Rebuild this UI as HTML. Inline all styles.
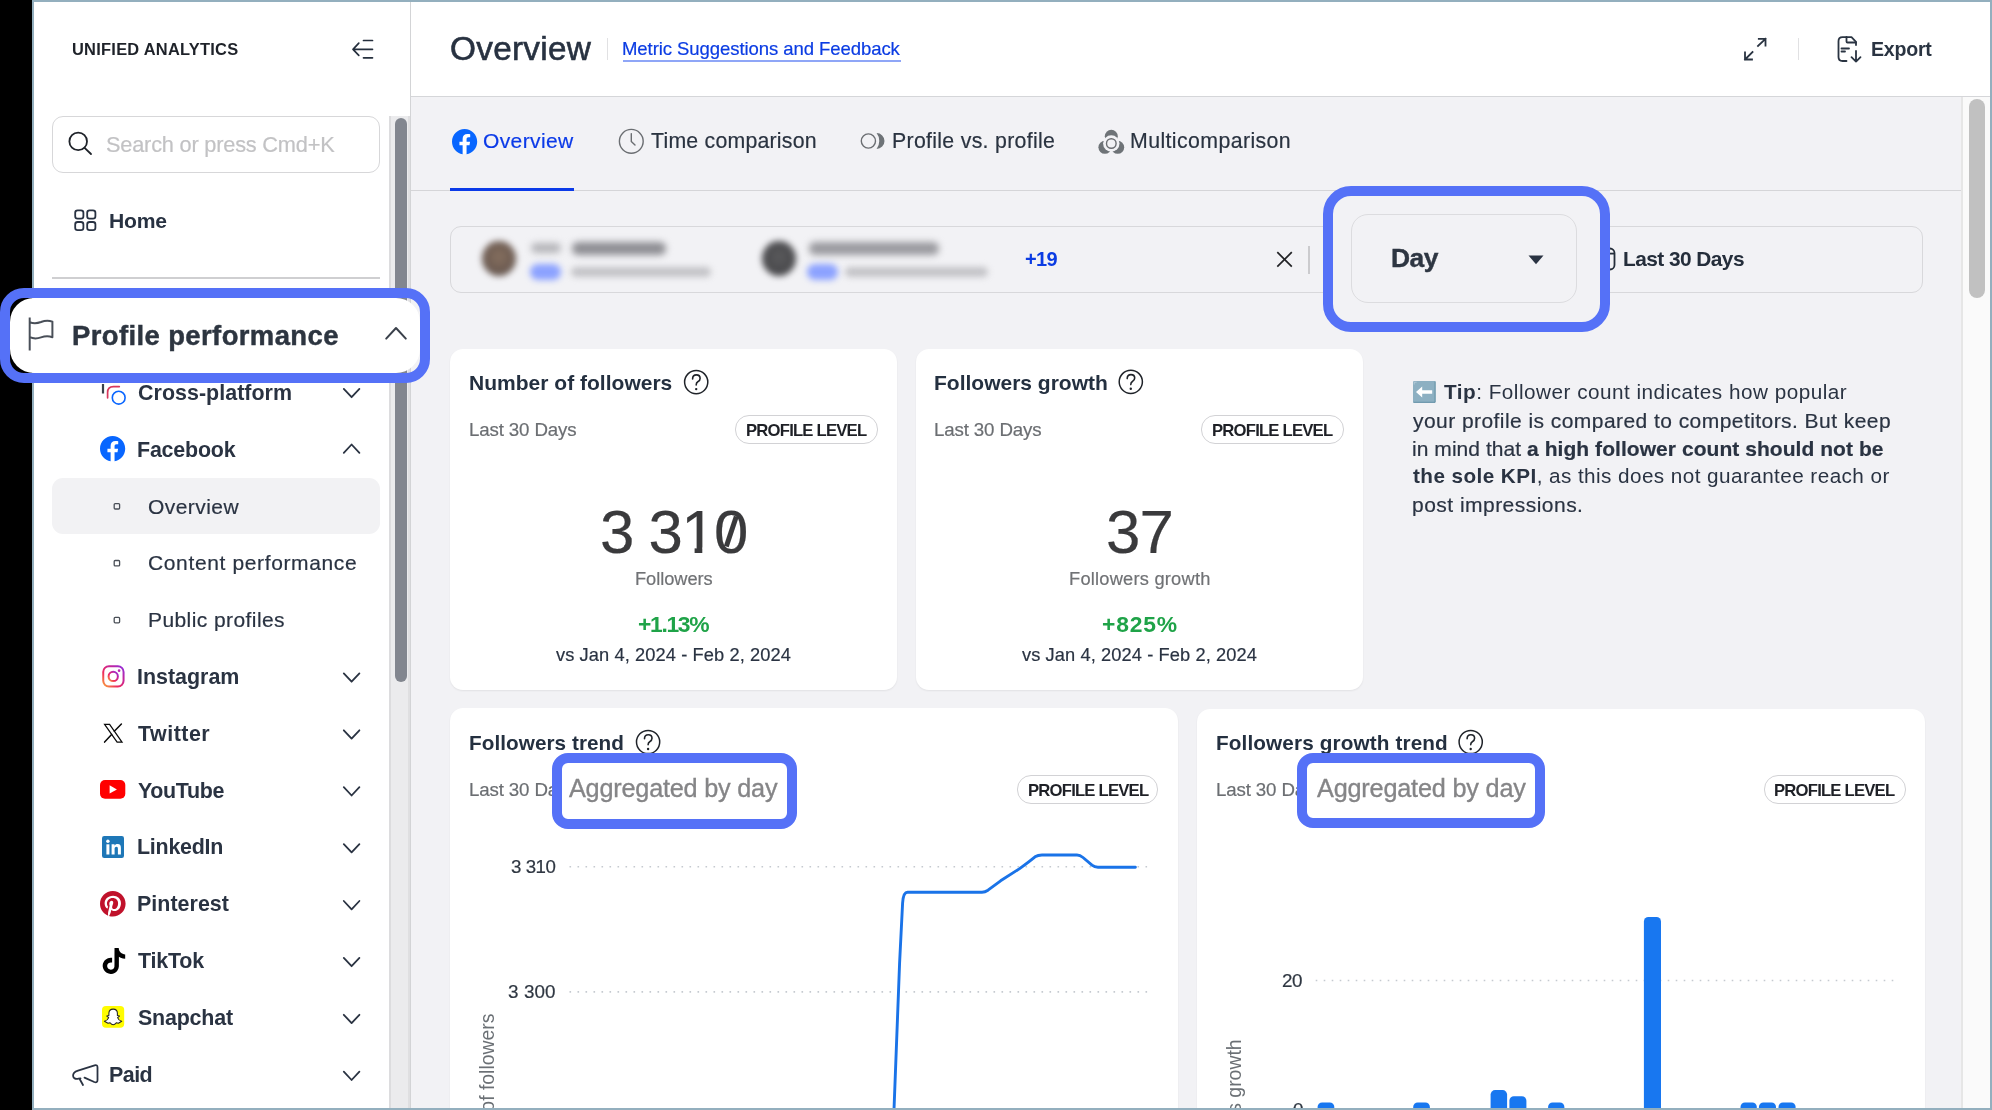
<!DOCTYPE html>
<html><head><meta charset="utf-8"><title>Overview</title>
<style>
html,body{margin:0;padding:0;width:1992px;height:1110px;overflow:hidden}
body{width:1992px;height:1110px;overflow:hidden;position:relative;background:#000;font-family:"Liberation Sans",sans-serif}
.a{position:absolute}
.t{position:absolute;white-space:nowrap;font-family:"Liberation Sans",sans-serif;will-change:transform}
svg{position:absolute;overflow:visible}
#root{position:relative;width:1992px;height:1110px;overflow:hidden;background:#000}
</style></head><body>
<div id="root">
<!-- frame -->
<div class="a" style="left:32px;top:0;width:1960px;height:1110px;background:#93AFBE"></div>
<div class="a" style="left:34px;top:2px;width:1956px;height:1106px;background:#fff"></div>
<!-- main bg -->
<div class="a" style="left:411px;top:97px;width:1550px;height:1011px;background:#F2F2F5"></div>
<div class="a" style="left:411px;top:96px;width:1579px;height:1px;background:#D5D6D9"></div>
<div class="a" style="left:410px;top:2px;width:1px;height:1106px;background:#D3D4D6"></div>
<!-- main scrollbar -->
<div class="a" style="left:1961px;top:97px;width:2px;height:1011px;background:#E6E6E6"></div>
<div class="a" style="left:1963px;top:97px;width:27px;height:1011px;background:#FAFAFA"></div>
<div class="a" style="left:1969px;top:99px;width:16px;height:199px;background:#C1C1C1;border-radius:8px"></div>
<!-- sidebar scrollbar -->
<div class="a" style="left:389px;top:116px;width:21px;height:992px;background:#EBEBED;border-left:2px solid #DCDCDE;border-right:2px solid #DFDFE1;box-sizing:border-box"></div>
<div class="a" style="left:395px;top:118px;width:12px;height:564px;background:#82868F;border-radius:6px"></div>

<!-- ===== header ===== -->
<svg style="left:0;top:0" width="1992" height="100">
 <g fill="none" stroke="#252F3D" stroke-width="1.7" stroke-linecap="round" stroke-linejoin="round">
  <path d="M363.5 40.5H372.5M353 49.3H372.5M363.5 57.8H372.5M358.8 43.2L353 49.3L358.8 55.3"/>
 </g>
 <g fill="none" stroke="#2A3442" stroke-width="1.8" stroke-linecap="square">
  <path d="M1758 46L1765.5 38.8M1758.8 38.8H1765.5V45.5M1752.5 52L1745 59.5M1745 52.5V59.5H1752"/>
 </g>
 <g fill="none" stroke="#2A3442" stroke-width="1.8" stroke-linecap="round" stroke-linejoin="round">
  <path d="M1846.5 37.2H1842.5Q1838.5 37.2 1838.5 41.2V57Q1838.5 61 1842.5 61H1846.5"/>
  <path d="M1846.5 37.2L1851.5 37.2L1856 41.8V45"/>
  <path d="M1846.5 37.2V41.5Q1846.5 42.5 1847.5 42.5H1856"/>
  <path d="M1841.5 48.5H1849M1841.5 51.5H1845"/>
  <path d="M1856 51V61.5M1851.5 57.2L1856 61.6L1860.5 57.2"/>
 </g>
</svg>
<div class="a" style="left:607px;top:38px;width:1px;height:22px;background:#E1E1E3"></div>
<div class="a" style="left:622.8px;top:60.2px;width:278px;height:2px;background:#8FA6F7"></div>
<div class="a" style="left:1798px;top:38px;width:1px;height:22px;background:#E1E1E3"></div>

<!-- ===== sidebar ===== -->
<div class="a" style="left:52.3px;top:116.4px;width:327.4px;height:56.2px;border:1.3px solid #D7D7D9;border-radius:11px;box-sizing:border-box"></div>
<svg style="left:0;top:0" width="400" height="1110">
 <g fill="none" stroke="#1F232A" stroke-width="1.8" stroke-linecap="round">
  <circle cx="78.2" cy="141.4" r="8.8"/><path d="M84.6 147.8L91 154"/>
 </g>
 <g fill="none" stroke="#283242" stroke-width="1.8">
  <rect x="75.2" y="210.4" width="8.2" height="8.2" rx="2.4"/>
  <rect x="87.2" y="210.4" width="8.2" height="8.2" rx="2.4"/>
  <rect x="75.2" y="222" width="8.2" height="8.2" rx="2.4"/>
  <rect x="87.2" y="222" width="8.2" height="8.2" rx="2.4"/>
 </g>
</svg>
<div class="a" style="left:52px;top:277px;width:328px;height:2px;background:#CFCFD1"></div>
<div class="a" style="left:52px;top:478px;width:328px;height:56px;background:#F2F2F4;border-radius:11px"></div>
<svg style="left:0;top:0" width="400" height="1110">
 <g fill="none" stroke="#2A3342" stroke-width="1.8" stroke-linecap="round" stroke-linejoin="round">
  <path d="M343.8 388.9L351.6 397.2L359.4 388.9"/>
  <path d="M343.8 673.4L351.6 681.7L359.4 673.4"/>
  <path d="M343.8 730.3L351.6 738.6L359.4 730.3"/>
  <path d="M343.8 787.2L351.6 795.5L359.4 787.2"/>
  <path d="M343.8 844.1L351.6 852.4L359.4 844.1"/>
  <path d="M343.8 901.0L351.6 909.3L359.4 901.0"/>
  <path d="M343.8 957.9L351.6 966.2L359.4 957.9"/>
  <path d="M343.8 1014.8L351.6 1023.1L359.4 1014.8"/>
  <path d="M343.8 1071.7L351.6 1080.0L359.4 1071.7"/>
  <path d="M343.8 452.8L351.6 444.5L359.4 452.8"/>
 </g>
 <g fill="none" stroke="#4A4F57" stroke-width="1.3">
  <rect x="114.2" y="503.6" width="5.4" height="5.4" rx="1"/>
  <rect x="114.2" y="560.5" width="5.4" height="5.4" rx="1"/>
  <rect x="114.2" y="617.4" width="5.4" height="5.4" rx="1"/>
 </g>
 <path d="M103 384V393.5" stroke="#3A414B" stroke-width="2.2" fill="none"/>
 <path d="M107.6 397.8V392.5Q107.6 386.6 113.4 386.6H119.3" stroke="#D8375C" stroke-width="1.7" fill="none" stroke-linecap="round"/>
 <circle cx="118.7" cy="397.7" r="6.4" stroke="#0A66FF" stroke-width="1.6" fill="none"/>
</svg>
<!-- FB sidebar -->
<svg style="left:100.4px;top:436.4px" width="25.2" height="25.2" viewBox="0 0 24 24"><circle cx="12" cy="12" r="11.6" fill="#fff"/><path fill="#0866FF" d="M24 12.073C24 5.405 18.627 0 12 0S0 5.405 0 12.073C0 18.1 4.388 23.094 10.125 24v-8.437H7.078v-3.49h3.047V9.41c0-3.025 1.792-4.697 4.533-4.697 1.312 0 2.686.236 2.686.236v2.971H15.83c-1.491 0-1.956.93-1.956 1.886v2.267h3.328l-.532 3.49h-2.796V24C19.612 23.094 24 18.1 24 12.073z"/></svg>
<!-- Instagram -->
<svg style="left:101.8px;top:664.6px" width="22.8" height="22.8" viewBox="0 0 24 24"><defs><linearGradient id="ig" x1="0" y1="1" x2="1" y2="0"><stop offset="0" stop-color="#F9A23A"/><stop offset="0.35" stop-color="#EE2A5F"/><stop offset="0.7" stop-color="#C1259F"/><stop offset="1" stop-color="#8E2FE0"/></linearGradient></defs><g fill="none" stroke="url(#ig)" stroke-width="2.1"><rect x="1.3" y="1.3" width="21.4" height="21.4" rx="6"/><circle cx="11.8" cy="12" r="4.9"/></g><circle cx="18" cy="6" r="1.4" fill="#B82AB0"/></svg>
<!-- X -->
<svg style="left:0;top:0" width="140" height="760"><g fill="none" stroke="#0A0A0A" stroke-linejoin="miter"><path d="M104.6 724.3H109.6L122 742.1H117.1Z" stroke-width="1.25"/><path d="M121.4 724L114.3 731.2M111.6 734.4L104.6 742.1" stroke-width="1.5" stroke-linecap="round"/></g></svg>
<!-- YouTube -->
<svg style="left:100.4px;top:780.4px" width="25.3" height="18.8" viewBox="0 0 25.3 18.8"><rect x="0" y="0" width="25.3" height="18.8" rx="5" fill="#FF0000"/><path d="M9.6 5.2V13.6L16.9 9.4Z" fill="#fff"/></svg>
<!-- LinkedIn -->
<svg style="left:102.2px;top:836.1px" width="22" height="22" viewBox="0 0 22 22"><rect width="22" height="22" rx="2.2" fill="#1E77B7"/><circle cx="5.9" cy="5.3" r="1.7" fill="#fff"/><rect x="4.4" y="8.3" width="3" height="10.2" fill="#fff"/><path fill="#fff" d="M9.6 8.3h2.9v1.4c.5-.9 1.6-1.6 3.1-1.6 2.6 0 3.3 1.6 3.3 4v6.4h-3v-5.6c0-1.2-.3-2.1-1.5-2.1-1.3 0-1.8 1-1.8 2.2v5.5h-3z"/></svg>
<!-- Pinterest -->
<svg style="left:100.4px;top:891.3px" width="25.6" height="25.6" viewBox="0 0 24 24"><circle cx="12" cy="12" r="11.5" fill="#fff"/><path fill="#C0122B" d="M12 0C5.373 0 0 5.372 0 12c0 5.084 3.163 9.426 7.627 11.174-.105-.949-.2-2.405.042-3.441.218-.937 1.407-5.965 1.407-5.965s-.359-.719-.359-1.782c0-1.668.967-2.914 2.171-2.914 1.023 0 1.518.769 1.518 1.69 0 1.029-.655 2.568-.994 3.995-.283 1.194.599 2.169 1.777 2.169 2.133 0 3.772-2.249 3.772-5.495 0-2.873-2.064-4.882-5.012-4.882-3.414 0-5.418 2.561-5.418 5.207 0 1.031.397 2.138.893 2.738a.36.36 0 01.083.345l-.333 1.36c-.053.22-.174.267-.402.161-1.499-.698-2.436-2.889-2.436-4.649 0-3.785 2.75-7.262 7.929-7.262 4.163 0 7.398 2.967 7.398 6.931 0 4.136-2.607 7.464-6.227 7.464-1.216 0-2.359-.631-2.75-1.378l-.748 2.853c-.271 1.043-1.002 2.35-1.492 3.146C9.57 23.812 10.763 24 12 24c6.627 0 12-5.373 12-12 0-6.628-5.373-12-12-12z"/></svg>
<!-- TikTok -->
<svg style="left:101.4px;top:948px" width="25.9" height="25.9" viewBox="0 0 24 24"><path fill="#000" d="M12.525.02c1.31-.02 2.61-.01 3.91-.02.08 1.53.63 3.09 1.75 4.17 1.12 1.11 2.7 1.62 4.24 1.79v4.03c-1.44-.05-2.89-.35-4.2-.97-.57-.26-1.1-.59-1.62-.93-.01 2.92.01 5.84-.02 8.75-.08 1.4-.54 2.79-1.35 3.94-1.31 1.92-3.58 3.17-5.91 3.21-1.43.08-2.86-.31-4.08-1.03-2.02-1.19-3.44-3.37-3.65-5.71-.02-.5-.03-1-.01-1.49.18-1.9 1.12-3.72 2.58-4.96 1.66-1.44 3.98-2.13 6.15-1.72.02 1.48-.04 2.96-.04 4.44-.99-.32-2.15-.23-3.02.37-.63.41-1.11 1.04-1.36 1.75-.21.51-.15 1.07-.14 1.61.24 1.64 1.82 3.02 3.5 2.87 1.12-.01 2.19-.66 2.77-1.61.19-.33.4-.67.41-1.06.1-1.79.06-3.57.07-5.36.01-4.03-.01-8.05.02-12.07z"/></svg>
<!-- Snapchat -->
<svg style="left:102.1px;top:1006.2px" width="22.2" height="21.8" viewBox="0 0 22.2 21.8"><rect width="22.2" height="21.8" rx="4" fill="#FFFC00"/><path fill="#fff" stroke="#222" stroke-width="1.05" stroke-linejoin="round" d="M11.2 3.1C13.8 3.1 15.4 4.9 15.4 7.3V9.4L17.5 10.1L15.6 11.6C16.2 13.4 17.8 14.8 19.7 15.3L16.4 17.2L14.3 16.8Q12.8 18.8 11.2 18.8Q9.6 18.8 8.1 16.8L6 17.2L2.4 15.3C4.4 14.8 6 13.4 6.7 11.6L4.8 10.1L6.9 9.4V7.3C6.9 4.9 8.6 3.1 11.2 3.1Z"/></svg>
<!-- megaphone -->
<svg style="left:0;top:0" width="120" height="1110"><path fill="none" stroke="#2A3342" stroke-width="1.8" stroke-linejoin="round" stroke-linecap="round" d="M84.5 1077.6L94.3 1082Q97.5 1083.2 97.5 1080V1067.5Q97.5 1064.4 94.6 1065.3L78 1070.6Q72.8 1072.3 73.1 1075.8Q73.5 1079.6 78.5 1078.6L80.5 1078.3M79.5 1078.7L83 1085"/></svg>
<!-- ===== tabs ===== -->
<svg style="left:451.6px;top:128.6px" width="25.2" height="25.2" viewBox="0 0 24 24"><circle cx="12" cy="12" r="11.6" fill="#fff"/><path fill="#0866FF" d="M24 12.073C24 5.405 18.627 0 12 0S0 5.405 0 12.073C0 18.1 4.388 23.094 10.125 24v-8.437H7.078v-3.49h3.047V9.41c0-3.025 1.792-4.697 4.533-4.697 1.312 0 2.686.236 2.686.236v2.971H15.83c-1.491 0-1.956.93-1.956 1.886v2.267h3.328l-.532 3.49h-2.796V24C19.612 23.094 24 18.1 24 12.073z"/></svg>
<svg style="left:0;top:0" width="1992" height="200">
 <g fill="none" stroke="#6B6E72" stroke-width="1.4" stroke-linecap="round" stroke-linejoin="round">
  <circle cx="631.3" cy="141.3" r="11.9"/>
  <path d="M631.3 133.6V141.4L635 145"/>
  <circle cx="868.4" cy="141" r="7.1"/>
  <circle cx="1111.3" cy="143.5" r="4.8"/>
 </g>
 <path fill="#6E7377" d="M876.6 133.1A7.9 7.9 0 0 1 876.6 148.9A13 13 0 0 0 876.6 133.1Z"/>
 <defs><mask id="mc"><rect x="1090" y="120" width="40" height="40" fill="#fff"/><circle cx="1111.3" cy="143.5" r="8.2" fill="#000"/></mask></defs>
 <g fill="#6E7377" mask="url(#mc)">
  <circle cx="1111.3" cy="136.3" r="6.5"/>
  <circle cx="1104.9" cy="147.3" r="6.5"/>
  <circle cx="1117.7" cy="147.3" r="6.5"/>
 </g>
</svg>
<div class="a" style="left:411px;top:189.6px;width:1550px;height:1.5px;background:#D5D5D8"></div>
<div class="a" style="left:450px;top:188px;width:124px;height:3px;background:#0B3AE8"></div>

<!-- ===== filter ===== -->
<div class="a" style="left:450.3px;top:226.2px;width:1140px;height:66.4px;border:1px solid #D8D8DB;border-radius:11px;box-sizing:border-box"></div>
<div class="a" style="left:1597px;top:226.2px;width:326px;height:66.4px;border:1px solid #D8D8DB;border-radius:11px;box-sizing:border-box"></div>
<div class="a" style="left:482px;top:241px;width:34px;height:35px;border-radius:50%;background:radial-gradient(circle at 50% 45%,#86705F 0,#6E5C52 55%,#4A4442 100%);filter:blur(3px)"></div>
<div class="a" style="left:531px;top:243px;width:30px;height:10px;border-radius:5px;background:#B5B5B9;filter:blur(3.5px)"></div>
<div class="a" style="left:572px;top:242px;width:94px;height:13px;border-radius:6px;background:#8E8E93;filter:blur(3.5px)"></div>
<div class="a" style="left:530px;top:264px;width:31px;height:16px;border-radius:8px;background:#8CA2FF;filter:blur(3px)"></div>
<div class="a" style="left:571px;top:267px;width:140px;height:10px;border-radius:5px;background:#C3C3C7;filter:blur(3px)"></div>
<div class="a" style="left:762px;top:241px;width:34px;height:35px;border-radius:50%;background:radial-gradient(circle at 50% 45%,#5A5A5C 0,#4A4A4D 60%,#3E3E42 100%);filter:blur(3px)"></div>
<div class="a" style="left:809px;top:242px;width:130px;height:13px;border-radius:6px;background:#9A9A9F;filter:blur(3.5px)"></div>
<div class="a" style="left:807px;top:264px;width:31px;height:16px;border-radius:8px;background:#8CA2FF;filter:blur(3px)"></div>
<div class="a" style="left:845px;top:267px;width:143px;height:10px;border-radius:5px;background:#C3C3C7;filter:blur(3px)"></div>
<svg style="left:0;top:0" width="1992" height="300">
 <path d="M1277.3 252.2L1291.8 266.6M1291.8 252.2L1277.3 266.6" stroke="#222326" stroke-width="1.7" fill="none"/>
 <g fill="none" stroke="#252E3B" stroke-width="1.8">
  <rect x="1604" y="248.5" width="10.5" height="21" rx="4.5"/>
  <path d="M1604 253.6H1614.5"/>
 </g>
</svg>
<div class="a" style="left:1308.2px;top:245.5px;width:1.5px;height:28.5px;background:#CBCBCE"></div>

<!-- ===== cards ===== -->
<div class="a" style="left:449.7px;top:349px;width:447.6px;height:341.3px;background:#fff;border-radius:13px;box-shadow:0 1px 2px rgba(0,0,0,0.07)"></div>
<div class="a" style="left:915.7px;top:349px;width:447.5px;height:341px;background:#fff;border-radius:13px;box-shadow:0 1px 2px rgba(0,0,0,0.07)"></div>
<div class="a" style="left:450.3px;top:708.4px;width:728px;height:500px;background:#fff;border-radius:13px;box-shadow:0 1px 2px rgba(0,0,0,0.07)"></div>
<div class="a" style="left:1197.1px;top:708.8px;width:728.1px;height:500px;background:#fff;border-radius:13px;box-shadow:0 1px 2px rgba(0,0,0,0.07)"></div>
<div class="a" style="left:735.2px;top:415px;width:142.6px;height:28.6px;border:1.2px solid #D2D2D5;border-radius:14px;box-sizing:border-box"></div>
<div class="a" style="left:1201.3px;top:415px;width:142.6px;height:28.6px;border:1.2px solid #D2D2D5;border-radius:14px;box-sizing:border-box"></div>
<div class="a" style="left:1017.3px;top:775.4px;width:141.2px;height:28.5px;border:1.2px solid #D2D2D5;border-radius:14px;box-sizing:border-box"></div>
<div class="a" style="left:1763.8px;top:775.4px;width:141.8px;height:28.6px;border:1.2px solid #D2D2D5;border-radius:14px;box-sizing:border-box"></div>
<svg style="left:0;top:0" width="1992" height="1110">
 <g transform="translate(696.2 382.1)"><circle cx="0" cy="0" r="11.6" fill="none" stroke="#1F2329" stroke-width="1.5"/><path d="M-3.6 -3.2Q-3.6 -7.2 0.2 -7.2Q3.9 -7.2 3.9 -3.7Q3.9 -1.5 1.6 -0.3Q0 0.6 0 2.8" fill="none" stroke="#1F2329" stroke-width="1.6" stroke-linecap="round"/><circle cx="0" cy="7" r="1.2" fill="#1F2329"/></g>
 <g transform="translate(1130.8 381.8)"><circle cx="0" cy="0" r="11.6" fill="none" stroke="#1F2329" stroke-width="1.5"/><path d="M-3.6 -3.2Q-3.6 -7.2 0.2 -7.2Q3.9 -7.2 3.9 -3.7Q3.9 -1.5 1.6 -0.3Q0 0.6 0 2.8" fill="none" stroke="#1F2329" stroke-width="1.6" stroke-linecap="round"/><circle cx="0" cy="7" r="1.2" fill="#1F2329"/></g>
 <g transform="translate(648.1 742)"><circle cx="0" cy="0" r="11.6" fill="none" stroke="#1F2329" stroke-width="1.5"/><path d="M-3.6 -3.2Q-3.6 -7.2 0.2 -7.2Q3.9 -7.2 3.9 -3.7Q3.9 -1.5 1.6 -0.3Q0 0.6 0 2.8" fill="none" stroke="#1F2329" stroke-width="1.6" stroke-linecap="round"/><circle cx="0" cy="7" r="1.2" fill="#1F2329"/></g>
 <g transform="translate(1470.7 742)"><circle cx="0" cy="0" r="11.6" fill="none" stroke="#1F2329" stroke-width="1.5"/><path d="M-3.6 -3.2Q-3.6 -7.2 0.2 -7.2Q3.9 -7.2 3.9 -3.7Q3.9 -1.5 1.6 -0.3Q0 0.6 0 2.8" fill="none" stroke="#1F2329" stroke-width="1.6" stroke-linecap="round"/><circle cx="0" cy="7" r="1.2" fill="#1F2329"/></g>
 <!-- emoji -->
 <rect x="1413" y="380.9" width="22.5" height="21.8" rx="1.2" fill="#8DB0C2"/>
 <path d="M1413.4 402.3H1435.1V381.4" fill="none" stroke="#5C8CA2" stroke-width="0.9"/>
 <path d="M1414.2 384.5V382.2H1416.6" fill="none" stroke="#C9DCE5" stroke-width="0.6"/>
 <path d="M1416 392L1422.2 386.4V390.3H1432.2V393.8H1422.2V397.5Z" fill="#fff"/>
 <!-- chart 1 gridlines -->
 <g stroke="#C5CAD0" stroke-width="1.6" stroke-dasharray="1.6 6.4">
  <path d="M569.5 866.7H1148"/>
  <path d="M569.5 991.9H1148"/>
  <path d="M1315.7 980.5H1894"/>
 </g>
 <path d="M893.8 1115L899.6 962.8L902.6 903Q903.3 892.2 907.5 892.2H982Q985 892.2 988 890.2L1000.6 880.8L1019.6 868.6Q1030 861 1035 856.8Q1038 855 1042 855H1077Q1080 855 1083 857.5L1092 865.2Q1094.5 867.2 1098 867.2H1135.4" fill="none" stroke="#1A73E8" stroke-width="2.9" stroke-linejoin="round" stroke-linecap="round"/>
 <g fill="#1877F0">
  <rect x="1317.6" y="1102.5" width="16.7" height="12" rx="4.5"/>
  <rect x="1413.2" y="1102.5" width="16.7" height="12" rx="4.5"/>
  <rect x="1490.6" y="1090.1" width="16.5" height="25" rx="4.5"/>
  <rect x="1509.4" y="1096.3" width="17" height="20" rx="4.5"/>
  <rect x="1548.1" y="1102.5" width="16.3" height="12" rx="4.5"/>
  <rect x="1643.9" y="916.9" width="17.1" height="200" rx="4.5"/>
  <rect x="1740.5" y="1102.5" width="16.3" height="12" rx="4.5"/>
  <rect x="1758.9" y="1102.5" width="17.1" height="12" rx="4.5"/>
  <rect x="1778.5" y="1102.5" width="17.1" height="12" rx="4.5"/>
 </g>
</svg>
<!-- rotated axis titles -->
<div class="a" style="left:494.1px;top:1013.9px;width:0;height:0;transform-origin:0 0;transform:rotate(-90deg)"><div class="t" style="right:0;top:-16.4px;font-size:19.4px;line-height:19.4px;color:#6B7075">Number of followers</div></div>
<div class="a" style="left:1241.4px;top:1039px;width:0;height:0;transform-origin:0 0;transform:rotate(-90deg)"><div class="t" style="right:0;top:-16.4px;font-size:19.4px;line-height:19.4px;color:#6B7075">Followers growth</div></div>

<div class="t" style="left:71.50px;top:41.00px;font-size:16.43px;line-height:16.43px;letter-spacing:0.255px;font-weight:700;color:#1E2229;">UNIFIED ANALYTICS</div>
<div class="t" style="left:105.90px;top:134.00px;font-size:21.74px;line-height:21.74px;letter-spacing:-0.194px;font-weight:400;color:#C2C2C4;-webkit-text-stroke-width:0.2px;">Search or press Cmd+K</div>
<div class="t" style="left:108.80px;top:210.00px;font-size:21.14px;line-height:21.14px;letter-spacing:-0.248px;font-weight:700;color:#283242;">Home</div>
<div class="t" style="left:137.90px;top:383.00px;font-size:21.43px;line-height:21.43px;letter-spacing:0.039px;font-weight:700;color:#2A3342;">Cross-platform</div>
<div class="t" style="left:137.10px;top:440.00px;font-size:21.43px;line-height:21.43px;letter-spacing:-0.188px;font-weight:700;color:#2A3342;">Facebook</div>
<div class="t" style="left:147.80px;top:496.00px;font-size:21.01px;line-height:21.01px;letter-spacing:0.450px;font-weight:400;color:#2A3342;-webkit-text-stroke-width:0.2px;">Overview</div>
<div class="t" style="left:147.80px;top:552.00px;font-size:21.01px;line-height:21.01px;letter-spacing:0.634px;font-weight:400;color:#2A3342;-webkit-text-stroke-width:0.2px;">Content performance</div>
<div class="t" style="left:147.80px;top:609.00px;font-size:21.01px;line-height:21.01px;letter-spacing:0.419px;font-weight:400;color:#2A3342;-webkit-text-stroke-width:0.2px;">Public profiles</div>
<div class="t" style="left:136.60px;top:667.00px;font-size:21.43px;line-height:21.43px;letter-spacing:0.003px;font-weight:700;color:#2A3342;">Instagram</div>
<div class="t" style="left:137.60px;top:724.00px;font-size:21.43px;line-height:21.43px;letter-spacing:0.509px;font-weight:700;color:#2A3342;">Twitter</div>
<div class="t" style="left:137.60px;top:781.00px;font-size:21.43px;line-height:21.43px;letter-spacing:-0.346px;font-weight:700;color:#2A3342;">YouTube</div>
<div class="t" style="left:136.60px;top:837.00px;font-size:21.43px;line-height:21.43px;letter-spacing:-0.247px;font-weight:700;color:#2A3342;">LinkedIn</div>
<div class="t" style="left:136.60px;top:894.00px;font-size:21.43px;line-height:21.43px;letter-spacing:0.028px;font-weight:700;color:#2A3342;">Pinterest</div>
<div class="t" style="left:137.60px;top:951.00px;font-size:21.43px;line-height:21.43px;letter-spacing:-0.181px;font-weight:700;color:#2A3342;">TikTok</div>
<div class="t" style="left:138.00px;top:1008.00px;font-size:21.43px;line-height:21.43px;letter-spacing:-0.189px;font-weight:700;color:#2A3342;">Snapchat</div>
<div class="t" style="left:108.70px;top:1065.00px;font-size:21.43px;line-height:21.43px;letter-spacing:-0.510px;font-weight:700;color:#2A3342;">Paid</div>
<div class="t" style="left:449.80px;top:32.00px;font-size:33.33px;line-height:33.33px;letter-spacing:0.282px;font-weight:400;color:#283241;-webkit-text-stroke:0.6px #283241;">Overview</div>
<div class="t" style="left:621.90px;top:40.00px;font-size:18.55px;line-height:18.55px;letter-spacing:-0.078px;font-weight:400;color:#0B3CE3;-webkit-text-stroke-width:0.2px;">Metric Suggestions and Feedback</div>
<div class="t" style="left:1871.10px;top:40.00px;font-size:19.57px;line-height:19.57px;letter-spacing:-0.228px;font-weight:700;color:#2A3442;">Export</div>
<div class="t" style="left:482.70px;top:130.00px;font-size:21.01px;line-height:21.01px;letter-spacing:0.378px;font-weight:400;color:#0B3AE8;-webkit-text-stroke-width:0.2px;">Overview</div>
<div class="t" style="left:651.00px;top:131.00px;font-size:21.30px;line-height:21.30px;letter-spacing:0.215px;font-weight:400;color:#2A3340;-webkit-text-stroke-width:0.2px;">Time comparison</div>
<div class="t" style="left:892.40px;top:131.00px;font-size:21.30px;line-height:21.30px;letter-spacing:0.301px;font-weight:400;color:#2A3340;-webkit-text-stroke-width:0.2px;">Profile vs. profile</div>
<div class="t" style="left:1130.20px;top:131.00px;font-size:21.30px;line-height:21.30px;letter-spacing:0.400px;font-weight:400;color:#2A3340;-webkit-text-stroke-width:0.2px;">Multicomparison</div>
<div class="t" style="left:1025.00px;top:249.00px;font-size:20.00px;line-height:20.00px;letter-spacing:-0.651px;font-weight:700;color:#0B3CE3;">+19</div>
<div class="t" style="left:1622.50px;top:249.00px;font-size:20.86px;line-height:20.86px;letter-spacing:-0.551px;font-weight:700;color:#252E3B;">Last 30 Days</div>
<div class="t" style="left:468.90px;top:372.00px;font-size:21.00px;line-height:21.00px;letter-spacing:0.015px;font-weight:700;color:#243040;">Number of followers</div>
<div class="t" style="left:468.80px;top:421.00px;font-size:18.70px;line-height:18.70px;letter-spacing:-0.139px;font-weight:400;color:#6B6E72;-webkit-text-stroke-width:0.2px;">Last 30 Days</div>
<div class="t" style="left:745.80px;top:423.00px;font-size:16.71px;line-height:16.71px;letter-spacing:-0.804px;font-weight:700;color:#1E2026;">PROFILE LEVEL</div>
<div class="t" style="left:599.70px;top:501.00px;font-size:61.74px;line-height:61.74px;letter-spacing:-1.531px;font-weight:400;color:#3A3A3C;-webkit-text-stroke-width:0.2px;">3 310</div>
<div class="t" style="left:634.50px;top:570.00px;font-size:18.26px;line-height:18.26px;letter-spacing:-0.045px;font-weight:400;color:#707275;-webkit-text-stroke-width:0.2px;">Followers</div>
<div class="t" style="left:637.90px;top:613.00px;font-size:22.86px;line-height:22.86px;letter-spacing:-1.320px;font-weight:700;color:#1FA348;">+1.13%</div>
<div class="t" style="left:556.30px;top:646.00px;font-size:18.26px;line-height:18.26px;letter-spacing:0.093px;font-weight:400;color:#2A3342;-webkit-text-stroke-width:0.2px;">vs Jan 4, 2024 - Feb 2, 2024</div>
<div class="t" style="left:934.30px;top:372.00px;font-size:21.00px;line-height:21.00px;letter-spacing:-0.000px;font-weight:700;color:#243040;">Followers growth</div>
<div class="t" style="left:934.30px;top:421.00px;font-size:18.70px;line-height:18.70px;letter-spacing:-0.139px;font-weight:400;color:#6B6E72;-webkit-text-stroke-width:0.2px;">Last 30 Days</div>
<div class="t" style="left:1211.90px;top:423.00px;font-size:16.71px;line-height:16.71px;letter-spacing:-0.804px;font-weight:700;color:#1E2026;">PROFILE LEVEL</div>
<div class="t" style="left:1106.00px;top:501.00px;font-size:61.74px;line-height:61.74px;letter-spacing:-0.825px;font-weight:400;color:#3A3A3C;-webkit-text-stroke-width:0.2px;">37</div>
<div class="t" style="left:1068.90px;top:570.00px;font-size:18.26px;line-height:18.26px;letter-spacing:0.228px;font-weight:400;color:#707275;-webkit-text-stroke-width:0.2px;">Followers growth</div>
<div class="t" style="left:1102.20px;top:613.00px;font-size:22.86px;line-height:22.86px;letter-spacing:0.786px;font-weight:700;color:#1FA348;">+825%</div>
<div class="t" style="left:1021.80px;top:646.00px;font-size:18.26px;line-height:18.26px;letter-spacing:0.093px;font-weight:400;color:#2A3342;-webkit-text-stroke-width:0.2px;">vs Jan 4, 2024 - Feb 2, 2024</div>
<div class="t" style="left:1443.50px;top:382.00px;font-size:20.71px;line-height:20.71px;letter-spacing:0.497px;font-weight:700;color:#2A3342;"><span>Tip</span><span style="font-weight:400">: Follower count indicates how popular</span></div>
<div class="t" style="left:1412.60px;top:410.00px;font-size:21.01px;line-height:21.01px;letter-spacing:0.442px;font-weight:400;color:#2A3342;-webkit-text-stroke-width:0.2px;">your profile is compared to competitors. But keep</div>
<div class="t" style="left:1411.60px;top:438.00px;font-size:21.01px;line-height:21.01px;letter-spacing:0.052px;font-weight:400;color:#2A3342;-webkit-text-stroke-width:0.2px;"><span>in mind that </span><span style="font-weight:700">a high follower count should not be</span></div>
<div class="t" style="left:1412.60px;top:466.00px;font-size:20.71px;line-height:20.71px;letter-spacing:0.429px;font-weight:700;color:#2A3342;"><span>the sole KPI</span><span style="font-weight:400">, as this does not guarantee reach or</span></div>
<div class="t" style="left:1411.60px;top:494.00px;font-size:21.01px;line-height:21.01px;letter-spacing:0.471px;font-weight:400;color:#2A3342;-webkit-text-stroke-width:0.2px;">post impressions.</div>
<div class="t" style="left:468.80px;top:733.00px;font-size:20.71px;line-height:20.71px;letter-spacing:0.057px;font-weight:700;color:#243040;">Followers trend</div>
<div class="t" style="left:468.80px;top:781.00px;font-size:18.70px;line-height:18.70px;letter-spacing:-0.139px;font-weight:400;color:#6B6E72;-webkit-text-stroke-width:0.2px;">Last 30 Days</div>
<div class="t" style="left:1027.90px;top:783.00px;font-size:16.71px;line-height:16.71px;letter-spacing:-0.804px;font-weight:700;color:#1E2026;">PROFILE LEVEL</div>
<div class="t" style="left:1215.90px;top:733.00px;font-size:20.71px;line-height:20.71px;letter-spacing:0.136px;font-weight:700;color:#243040;">Followers growth trend</div>
<div class="t" style="left:1215.90px;top:781.00px;font-size:18.70px;line-height:18.70px;letter-spacing:-0.139px;font-weight:400;color:#6B6E72;-webkit-text-stroke-width:0.2px;">Last 30 Days</div>
<div class="t" style="left:1774.40px;top:783.00px;font-size:16.71px;line-height:16.71px;letter-spacing:-0.804px;font-weight:700;color:#1E2026;">PROFILE LEVEL</div>
<div class="t" style="left:510.90px;top:858.00px;font-size:18.70px;line-height:18.70px;letter-spacing:-0.468px;font-weight:400;color:#2F3742;-webkit-text-stroke-width:0.2px;">3 310</div>
<div class="t" style="left:508.40px;top:983.00px;font-size:18.84px;line-height:18.84px;letter-spacing:0.089px;font-weight:400;color:#2F3742;-webkit-text-stroke-width:0.2px;">3 300</div>
<div class="t" style="left:1281.90px;top:972.00px;font-size:18.84px;line-height:18.84px;letter-spacing:-0.371px;font-weight:400;color:#2F3742;-webkit-text-stroke-width:0.2px;">20</div>
<div class="t" style="left:1293.00px;top:1101.00px;font-size:18.84px;line-height:18.84px;letter-spacing:0.000px;font-weight:400;color:#2F3742;-webkit-text-stroke-width:0.2px;">0</div>
<!-- bottom frame strip to clip overflow -->
<div class="a" style="left:32px;top:1108px;width:1960px;height:2px;background:#93AFBE"></div>
<!-- Profile performance callout -->
<div class="a" style="left:10px;top:298.4px;width:410px;height:74.8px;background:#fff;border-radius:24px"></div>
<svg style="left:0;top:0" width="440" height="400">
 <path d="M29.7 317.6V350.6M29.7 322.2Q35 324.2 41 322Q47 319.6 52.4 321.6V337.2Q47 335.4 41 337.4Q35 339.6 29.7 337.2" fill="none" stroke="#4A5059" stroke-width="2" stroke-linejoin="round" filter="url(#bl)"/>
 <defs><filter id="bl" x="-20%" y="-20%" width="140%" height="140%"><feGaussianBlur stdDeviation="0.7"/></filter></defs>
 <path d="M386.2 338.6L396 328L405.8 338.6" fill="none" stroke="#3A414B" stroke-width="2" stroke-linecap="round" stroke-linejoin="round" filter="url(#bl)"/>
</svg>
<div class="a" style="left:0;top:288.1px;width:430px;height:95.2px;border:10px solid #5571F7;border-radius:24px;box-sizing:border-box"></div>
<!-- Day callout -->
<div class="a" style="left:1332.5px;top:196.2px;width:267px;height:126.3px;background:#F2F2F5;border-radius:18px"></div>
<div class="a" style="left:1351px;top:213.6px;width:225.8px;height:89.4px;border:1.3px solid #DCDCDF;border-radius:17px;box-sizing:border-box"></div>
<svg style="left:0;top:0" width="1992" height="400"><path d="M1528.5 255.6H1543.5L1536 264.2Z" fill="#2A3342"/></svg>
<div class="a" style="left:1322.5px;top:186.2px;width:287px;height:146.3px;border:10px solid #5571F7;border-radius:28px;box-sizing:border-box"></div>
<!-- Aggregated callouts -->
<div class="a" style="left:561.4px;top:762.8px;width:225px;height:56.2px;background:#fff;border-radius:7px"></div>
<div class="a" style="left:1307.4px;top:763px;width:227.5px;height:55.4px;background:#fff;border-radius:7px"></div>
<div class="t" style="left:71.90px;top:322.00px;font-size:27.43px;line-height:27.43px;letter-spacing:0.407px;font-weight:700;color:#2D3540;filter:blur(0.65px);-webkit-text-stroke:0.45px #2D3540;">Profile performance</div>
<div class="t" style="left:1390.60px;top:245.00px;font-size:26.43px;line-height:26.43px;letter-spacing:-0.528px;font-weight:700;color:#2E3642;filter:blur(0.65px);-webkit-text-stroke:0.4px #2E3642;">Day</div>
<div class="t" style="left:569.00px;top:776.00px;font-size:25.22px;line-height:25.22px;letter-spacing:-0.199px;font-weight:400;color:#858587;filter:blur(0.6px);-webkit-text-stroke:0.35px #858587;">Aggregated by day</div>
<div class="t" style="left:1316.60px;top:776.00px;font-size:25.22px;line-height:25.22px;letter-spacing:-0.180px;font-weight:400;color:#858587;filter:blur(0.6px);-webkit-text-stroke:0.35px #858587;">Aggregated by day</div>
<div class="a" style="left:551.5px;top:752.9px;width:245.2px;height:75.9px;border:10px solid #5571F7;border-radius:16px;box-sizing:border-box"></div>
<div class="a" style="left:1297.4px;top:753px;width:247.5px;height:75.4px;border:10px solid #5571F7;border-radius:16px;box-sizing:border-box"></div>
<!-- big number tweaks: remove foot of 1, slashed zero -->
<svg style="left:0;top:0" width="1992" height="700">
 <rect x="685" y="547.6" width="9.6" height="7" fill="#fff"/>
 <rect x="702.3" y="547.6" width="11" height="7" fill="#fff"/>
 <path d="M726.3 546.5L736.3 516.5" stroke="#3A3A3C" stroke-width="5" stroke-linecap="butt"/>
</svg>

</div>
</body></html>
